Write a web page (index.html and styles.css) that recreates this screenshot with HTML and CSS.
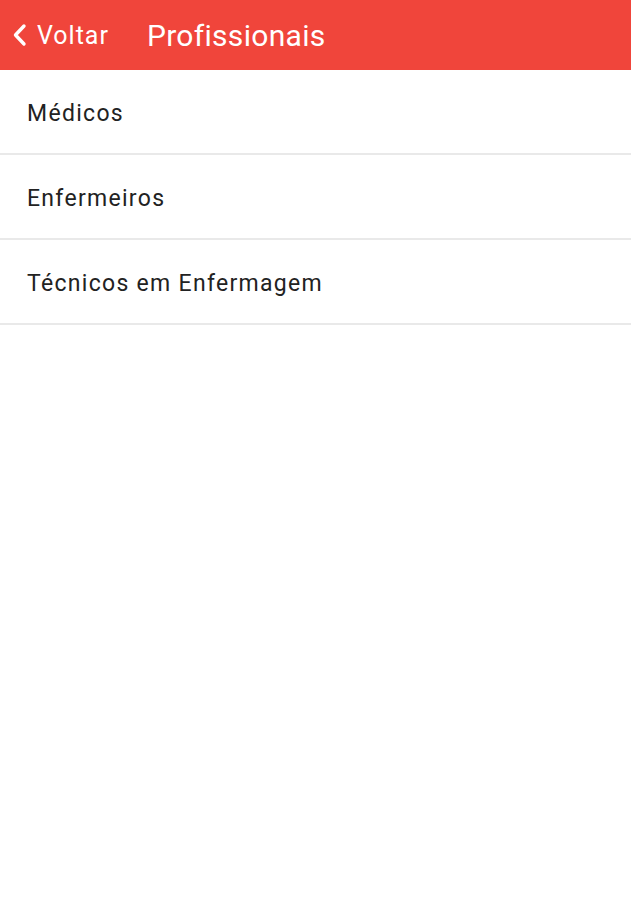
FILE: index.html
```html
<!DOCTYPE html>
<html lang="pt">
  <head>
    <meta charset="UTF-8" />
    <meta name="viewport" content="width=device-width, initial-scale=1.0" />
    <title>Profissionais</title>
    <link rel="stylesheet" href="styles.css">
  </head>
  <body>
    <div class="header">
      <a class="back" href="#">
        <svg class="chevron" width="16" height="24" viewBox="0 0 16 24">
          <path d="M13 3 L4.5 12 L13 21" fill="none" stroke="white" stroke-width="3.4" stroke-linecap="round" stroke-linejoin="round" />
        </svg>
        <span>Voltar</span>
      </a>
      <h1 class="title">Profissionais</h1>
    </div>
    <ul class="list">
      <li class="item">Médicos</li>
      <li class="item">Enfermeiros</li>
      <li class="item">Técnicos em Enfermagem</li>
    </ul>
  </body>
</html>
```

FILE: styles.css
```css
body {
  margin: 0;
  background-color: white;
  font-family: Roboto, "Noto Sans", sans-serif;
}
.header {
  display: flex;
  align-items: center;
  height: 70px;
  background-color: #f0453b;
  color: white;
  padding-left: 11px;
}
.back {
  display: flex;
  align-items: center;
  gap: 10px;
  color: white;
  text-decoration: none;
  font-size: 25px;
  letter-spacing: 1px;
}
.title {
  margin: 0 0 0 38px;
  font-size: 30px;
  font-weight: normal;
  letter-spacing: 0.3px;
}
.list {
  list-style: none;
  margin: 0;
  padding: 0;
}
.item {
  box-sizing: border-box;
  height: 85px;
  display: flex;
  align-items: center;
  padding: 3px 0 0 27px;
  font-size: 23px;
  color: #222;
  border-bottom: 2px solid #e9e9e9;
  letter-spacing: 1.3px;
}
```
